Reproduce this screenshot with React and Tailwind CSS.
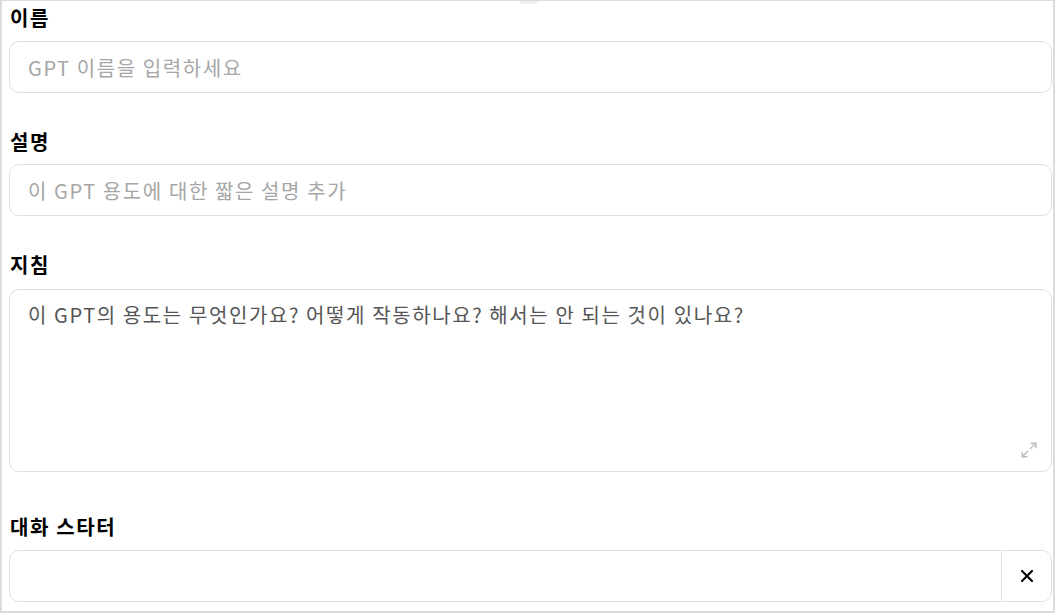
import { Maximize2, X } from 'lucide-react';

const font = { fontFamily: '"Malgun Gothic", "Noto Sans CJK KR", "Noto Sans", sans-serif' };

function Label({ children, className = '' }) {
  return (
    <div className={`h-[28px] leading-[28px] text-[20px] font-bold text-black pl-[1px] tracking-[1.6px] ${className}`}>
      {children}
    </div>
  );
}

export default function App() {
  return (
    <div
      className="w-[1055px] h-[613px] bg-white border-2 border-[#dcdcdc] border-t-[1px] pl-[7px] pr-[1px] relative overflow-hidden"
      style={font}
    >
      {/* drag handle at top */}
      <div className="absolute left-[518px] top-0 w-[18px] h-[3px] rounded-b bg-[#f0f0f0]" />

      <Label className="mt-[3px]">이름</Label>
      <input
        className="mt-[9px] w-full h-[52px] rounded-[10px] border border-[#e0e0e0] px-[18px] text-[20px] tracking-[1.6px] text-[#333] placeholder:text-[#a6a6a6] outline-none"
        placeholder="GPT 이름을 입력하세요"
      />

      <Label className="mt-[35px]">설명</Label>
      <input
        className="mt-[8px] w-full h-[52px] rounded-[10px] border border-[#e0e0e0] px-[18px] text-[20px] tracking-[1.6px] text-[#333] placeholder:text-[#a6a6a6] outline-none"
        placeholder="이 GPT 용도에 대한 짧은 설명 추가"
      />

      <Label className="mt-[35px]">지침</Label>
      <div className="mt-[10px] w-full h-[183px] rounded-[10px] border border-[#e0e0e0] relative">
        <div className="px-[18px] pt-[11px] text-[20px] leading-[28px] tracking-[1.6px] text-[#555]">
          이 GPT의 용도는 무엇인가요? 어떻게 작동하나요? 해서는 안 되는 것이 있나요?
        </div>
        <Maximize2 className="absolute right-[13px] bottom-[12px] text-[#bdbdbd]" size={18} strokeWidth={2} />
      </div>

      <Label className="mt-[41px]">대화 스타터</Label>
      <div className="mt-[9px] w-full h-[52px] rounded-[10px] border border-[#e0e0e0] flex">
        <input className="flex-1 h-full px-[18px] text-[20px] outline-none rounded-l-[10px]" />
        <button className="w-[50px] h-full border-l border-[#e0e0e0] flex items-center justify-center text-black">
          <X size={20} strokeWidth={2.6} />
        </button>
      </div>
    </div>
  );
}
